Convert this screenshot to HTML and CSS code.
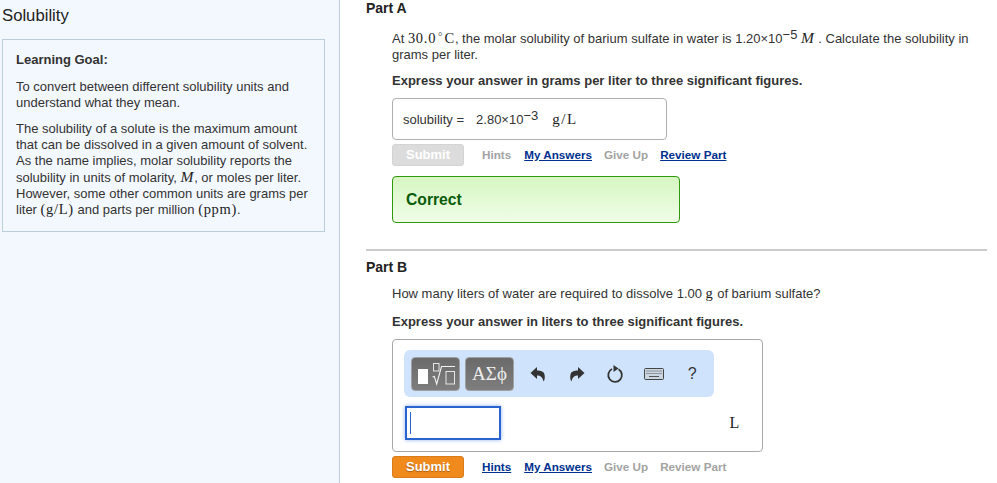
FILE: index.html
```html
<!DOCTYPE html>
<html lang="en">
<head>
<meta charset="utf-8">
<title>Solubility</title>
<link rel="stylesheet" href="styles.css">
</head>
<body>
<div class="page">
  <aside class="side">
    <h1 class="title">Solubility</h1>
    <section class="goal">
      <h2 class="goal-head">Learning Goal:</h2>
      <p class="goal-p">To convert between different solubility units and understand what they mean.</p>
      <p class="goal-p">The solubility of a solute is the maximum amount that can be dissolved in a given amount of solvent. As the name implies, molar solubility reports the solubility in units of molarity, <span class="mi">M</span>, or moles per liter. However, some other common units are grams per liter <span class="mn">(g/L)</span> and parts per million <span class="mn">(ppm)</span>.</p>
    </section>
  </aside>
  <main class="main">
    <section class="part part-a">
      <h2 class="part-head">Part A</h2>
      <div class="part-body">
        <p class="q q-a">At <span class="mn">30.0</span><span class="deg">°</span><span class="mn">C</span>, the molar solubility of barium sulfate in water is 1.20×10<sup class="sup">−5</sup> <span class="mi">M</span> . Calculate the solubility in grams per liter.</p>
        <p class="inst">Express your answer in grams per liter to three significant figures.</p>
        <div class="answer-box">
          <span class="ans-label">solubility =</span>
          <span class="ans-val">2.80×10<sup class="sup">−3</sup></span>
          <span class="mn ans-unit">g/L</span>
        </div>
        <div class="actions">
          <button class="btn btn-off" type="button">Submit</button>
          <span class="lnk lnk-first off">Hints</span>
          <a class="lnk" href="#">My Answers</a>
          <span class="lnk off">Give Up</span>
          <a class="lnk" href="#">Review Part</a>
        </div>
        <div class="correct">Correct</div>
      </div>
    </section>
    <section class="part part-b">
      <h2 class="part-head">Part B</h2>
      <div class="part-body">
        <p class="q q-b">How many liters of water are required to dissolve 1.00 <span class="mn">g</span> of barium sulfate?</p>
        <p class="inst inst-b">Express your answer in liters to three significant figures.</p>
        <div class="editor">
          <div class="toolbar">
            <button class="tool-btn tool-tpl" type="button" aria-label="Templates">
              <svg width="47" height="32" viewBox="0 0 47 32"><rect x="6" y="11" width="10" height="15" fill="#fff"/><rect x="21.500" y="5.500" width="5.500" height="7.500" fill="none" stroke="#e6e6e6"/><path d="M20.500 19l1.800-.6 2.400 7.600 4.800-17.500H43" fill="none" stroke="#f2f2f2" stroke-width="1.100"/><rect x="34" y="13.500" width="8.500" height="12.500" fill="none" stroke="#e6e6e6"/></svg>
            </button>
            <button class="tool-btn tool-sym" type="button">ΑΣϕ</button>
            <span class="tool-ic"><svg width="16" height="16" viewBox="0 0 16 16"><path d="M7 1 .5 7 7 13V9.500c3 0 5.500 1 6.500 6 1.500-2 1.500-4.500 1-7C14 5.500 11 4.500 7 4.500z" fill="#333"/></svg></span>
            <span class="tool-ic"><svg width="16" height="16" viewBox="0 0 16 16"><path d="M9 1l6.500 6L9 13V9.500c-3 0-5.500 1-6.500 6-1.500-2-1.500-4.500-1-7C2 5.500 5 4.500 9 4.500z" fill="#333"/></svg></span>
            <span class="tool-ic"><svg width="18" height="19" viewBox="0 0 18 19"><path d="M6 5a6.800 6.800 0 1 0 6.500.2" fill="none" stroke="#333" stroke-width="1.800"/><path d="M7.500 1 12.500 4.500 7.500 8z" fill="#333"/></svg></span>
            <span class="tool-ic"><svg width="20" height="12" viewBox="0 0 20 12"><rect x=".5" y=".5" width="19" height="11" rx="1" fill="#c9d5e0" stroke="#444"/><path d="M2.500 3h15M2.500 5.500h15" stroke="#555" stroke-dasharray="1 1"/><path d="M5 8.500h10" stroke="#555"/></svg></span>
            <span class="tool-ic tool-help">?</span>
          </div>
          <div class="input-row">
            <div class="math-input"><span class="caret"></span></div>
            <span class="mn unit-l">L</span>
          </div>
        </div>
        <div class="actions actions-b">
          <button class="btn btn-on" type="button">Submit</button>
          <a class="lnk lnk-first" href="#">Hints</a>
          <a class="lnk" href="#">My Answers</a>
          <span class="lnk off">Give Up</span>
          <span class="lnk off">Review Part</span>
        </div>
      </div>
    </section>
  </main>
</div>
</body>
</html>
```
FILE: styles.css
```css
* { box-sizing: border-box; }
html, body { margin: 0; height: 100%; overflow: hidden; }
body { background: #fff; color: #333; font: 13px/16px "Liberation Sans", Arial, sans-serif; }
p, h1, h2 { margin: 0; }
.page { display: flex; height: 483px; width: 997px; }
.side { width: 340px; flex: none; background: #f3f8fe; border-right: 1px solid #c4d2e0; padding: 6px 14px 0 2px; }
.title { font-size: 16.700px; line-height: 20px; font-weight: 400; color: #222; }
.goal { margin-top: 13px; border: 1px solid #bccddb; padding: 12px 13px 8px 13px; height: 193px; }
.goal-head { font-size: 13px; font-weight: 700; line-height: 16px; color: #333; margin-bottom: 11px; }
.goal-p { margin-bottom: 10px; }
.mn, .mi { font-family: "Liberation Serif", serif; font-size: 14.500px; line-height: 1; letter-spacing: .7px; color: #222; }
.mi { font-style: italic; font-size: 15.500px; }
.deg { font-family: "Liberation Serif", serif; font-size: 11px; vertical-align: 3px; padding: 0 2px; line-height: 0; }
.sup { font-size: 13px; line-height: 0; vertical-align: 4px; }
.main { flex: none; width: 621px; margin-left: 26px; }
.part-head { font-size: 14px; line-height: 16px; font-weight: 700; color: #222; }
.part-body { padding-left: 26px; }
.q-a { margin-top: 14px; width: 590px; }
.inst { font-weight: 700; margin-top: 10px; color: #333; }
.answer-box { margin-top: 9px; width: 275px; height: 42px; border: 1px solid #b0b0b0; border-radius: 4px; padding: 1px 10px 0; display: flex; align-items: center; }
.ans-label { font-size: 13px; margin-right: 12px; }
.ans-val { margin-right: 14px; }
.ans-unit { font-size: 15px; letter-spacing: 1.500px; }
.actions { display: flex; align-items: center; margin-top: 4px; height: 22px; }
.btn { width: 72px; height: 22px; border-radius: 3px; font: 700 13px/18px "Liberation Sans", Arial, sans-serif; color: #fff; padding: 0; margin-right: 18px; border: 1px solid; }
.btn-off { background: #dcdcdc; border-color: #d4d4d4; }
.btn-on { background: #f08a1d; border-color: #d87c1c; text-shadow: 0 1px 1px #a85c10; }
.lnk { font-size: 11.700px; font-weight: 700; color: #00308f; text-decoration: underline; margin-right: 12px; }
.lnk-first { margin-right: 13px; }
.lnk.off { color: #a3a3a3; text-decoration: none; }
.correct { margin-top: 10px; width: 288px; height: 47px; border: 1px solid #2f9a10; border-radius: 4px; background: linear-gradient(#d6f6c2, #f0fde8); color: #0a5c0a; font-weight: 700; font-size: 15.700px; line-height: 45px; padding-left: 13px; }
.part-b { margin-top: 26px; border-top: 2px solid #cbcbcb; padding-top: 8px; }
.q-b { margin-top: 11px; }
.inst-b { margin-top: 12px; }
.editor { margin-top: 9px; width: 371px; height: 113px; border: 1px solid #a8a8a8; border-radius: 4px; padding: 10px 11px; }
.toolbar { width: 310px; height: 47px; background: #cfe4fc; border-radius: 6px; display: flex; align-items: center; padding-left: 7px; }
.tool-btn { height: 34px; width: 49px; border: 1px solid #a0a0a0; border-radius: 4px; background: linear-gradient(#6a6a6a, #7e7e7e); color: #eee; padding: 0; margin-right: 5px; display: flex; align-items: center; justify-content: center; font: 19px "Liberation Serif", serif; }
.tool-ic { width: 38.500px; flex: none; display: flex; justify-content: center; align-items: center; }
.tool-help { font-size: 16px; color: #333; }
.input-row { display: flex; align-items: center; justify-content: space-between; margin-top: 9px; margin-left: 1px; padding-right: 11px; }
.math-input { width: 96px; height: 34px; border: 2px solid #2a63d0; box-shadow: 0 0 4px #8fb3ee; padding: 4px 3px; }
.caret { display: block; width: 1px; height: 22px; background: #2a63d0; }
.unit-l { font-size: 16px; }
.actions-b { margin-top: 4px; }
```
